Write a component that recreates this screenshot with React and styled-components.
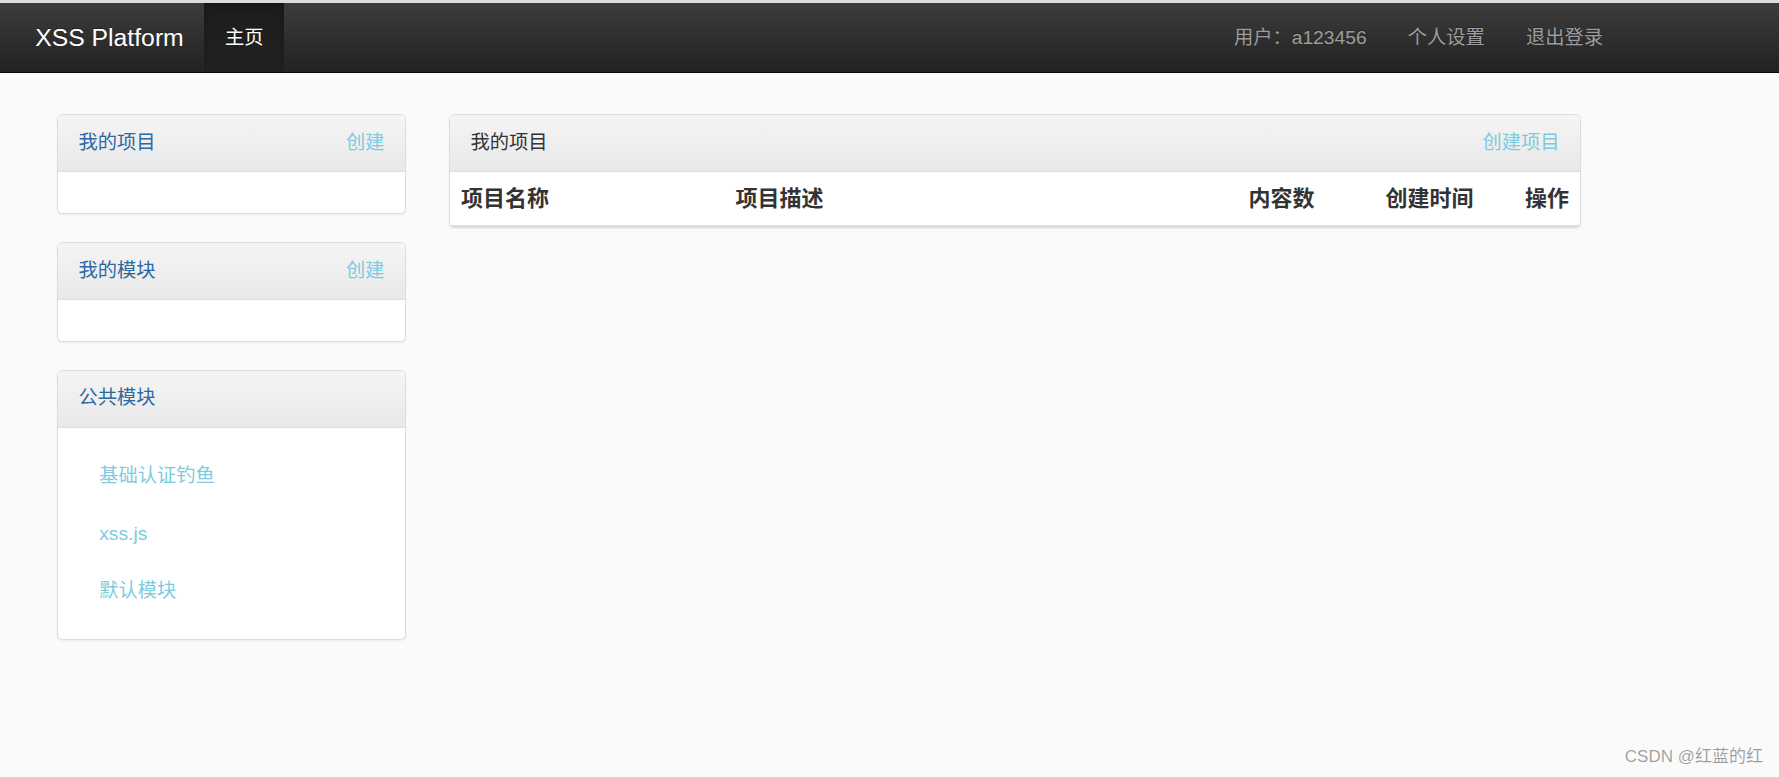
import React from "react";
import styled, { createGlobalStyle } from "styled-components";

const GlobalStyle = createGlobalStyle`
  html, body {
    margin: 0;
    padding: 0;
    background: #fafafa;
  }
  body {
    font-family: "Liberation Sans", "Noto Sans CJK SC", sans-serif;
    font-size: 19.25px;
    line-height: 27.5px;
    color: #333;
  }
  * { box-sizing: border-box; }
`;

const Page = styled.div`
  position: relative;
  min-height: 777px;
  background: #fafafa;
  border-top: 3px solid #dcdcdc;
`;

const Navbar = styled.nav`
  height: 70px;
  background: linear-gradient(to bottom, #3c3c3c 0%, #222 100%);
  border-bottom: 1px solid #080808;
`;

const NavContainer = styled.div`
  width: 1609px;
  margin-left: 14.6px;
  height: 69px;
  display: flex;
  align-items: stretch;
`;

const Brand = styled.a`
  display: flex;
  align-items: center;
  padding: 0 20.6px;
  font-size: 24.75px;
  color: #fff;
  text-decoration: none;
  text-shadow: 0 -1px 0 rgba(0, 0, 0, 0.25);
`;

const NavList = styled.ul`
  display: flex;
  list-style: none;
  margin: 0;
  padding: 0;
  margin-left: ${(p) => (p.$right ? "auto" : "0")};
`;

const NavItem = styled.li`
  display: flex;
`;

const NavLink = styled.a`
  display: flex;
  align-items: center;
  padding: 0 20.6px;
  color: ${(p) => (p.$active ? "#fff" : "#9d9d9d")};
  text-decoration: none;
  text-shadow: 0 -1px 0 rgba(0, 0, 0, 0.25);
  background: ${(p) =>
    p.$active ? "linear-gradient(to bottom, #1c1c1c 0%, #222 100%)" : "transparent"};
  box-shadow: ${(p) => (p.$active ? "inset 0 3px 9px rgba(0, 0, 0, 0.2)" : "none")};
`;

const Content = styled.div`
  display: flex;
  align-items: flex-start;
  gap: 43px;
  padding-left: 57px;
  padding-top: 41px;
`;

const Sidebar = styled.div`
  width: 349px;
  display: flex;
  flex-direction: column;
  gap: 27.5px;
`;

const Main = styled.div`
  width: 1132px;
`;

const Panel = styled.div`
  background: #fff;
  border: 1px solid #ddd;
  border-radius: 5.5px;
  box-shadow: 0 1px 2px rgba(0, 0, 0, 0.06);
  overflow: hidden;
`;

const PanelHeading = styled.div`
  display: flex;
  justify-content: space-between;
  align-items: center;
  padding: 13.75px 20.6px;
  line-height: 28.5px;
  background: linear-gradient(to bottom, #f5f5f5 0%, #e8e8e8 100%);
  border-bottom: 1px solid #ddd;
`;

const PanelTitle = styled.span`
  color: ${(p) => (p.$muted ? "#333" : "#2c68a2")};
`;

const InfoLink = styled.a`
  color: #7ccbe0;
  text-decoration: none;
`;

const PanelBody = styled.div`
  padding: 20.6px;
  min-height: 41.25px;
`;

const PillList = styled.ul`
  list-style: none;
  margin: 0;
  padding: 0;
  display: flex;
  flex-direction: column;
  gap: 2.75px;
`;

const PillLink = styled.a`
  display: block;
  padding: 13.75px 20.6px;
  line-height: 27.5px;
  color: #7ccbe0;
  text-decoration: none;
`;

const TableHead = styled.div`
  display: grid;
  grid-template-columns: 274.6px 513px 137px 138px 1fr;
  border-bottom: 2.75px solid #ddd;
`;

const HeadCell = styled.div`
  padding: 11px;
  font-size: 22px;
  line-height: 31px;
  font-weight: 700;
  color: #333;
  text-align: ${(p) => (p.$align === "right" ? "right" : "left")};
`;

const Watermark = styled.div`
  position: absolute;
  right: 16px;
  bottom: 10px;
  font-size: 17px;
  line-height: 20px;
  color: rgba(0, 0, 0, 0.38);
`;

const modules = ["基础认证钓鱼", "xss.js", "默认模块"];

export default function App() {
  return (
    <>
      <GlobalStyle />
      <Page>
        <Navbar>
          <NavContainer>
            <Brand href="#">XSS Platform</Brand>
            <NavList>
              <NavItem>
                <NavLink $active href="#">主页</NavLink>
              </NavItem>
            </NavList>
            <NavList $right>
              <NavItem>
                <NavLink href="#">用户：a123456</NavLink>
              </NavItem>
              <NavItem>
                <NavLink href="#">个人设置</NavLink>
              </NavItem>
              <NavItem>
                <NavLink href="#">退出登录</NavLink>
              </NavItem>
            </NavList>
          </NavContainer>
        </Navbar>

        <Content>
          <Sidebar>
            <Panel>
              <PanelHeading>
                <PanelTitle>我的项目</PanelTitle>
                <InfoLink href="#">创建</InfoLink>
              </PanelHeading>
              <PanelBody />
            </Panel>
            <Panel>
              <PanelHeading>
                <PanelTitle>我的模块</PanelTitle>
                <InfoLink href="#">创建</InfoLink>
              </PanelHeading>
              <PanelBody />
            </Panel>
            <Panel>
              <PanelHeading>
                <PanelTitle>公共模块</PanelTitle>
              </PanelHeading>
              <PanelBody>
                <PillList>
                  {modules.map((m) => (
                    <li key={m}>
                      <PillLink href="#">{m}</PillLink>
                    </li>
                  ))}
                </PillList>
              </PanelBody>
            </Panel>
          </Sidebar>

          <Main>
            <Panel>
              <PanelHeading>
                <PanelTitle $muted>我的项目</PanelTitle>
                <InfoLink href="#">创建项目</InfoLink>
              </PanelHeading>
              <TableHead>
                <HeadCell>项目名称</HeadCell>
                <HeadCell>项目描述</HeadCell>
                <HeadCell>内容数</HeadCell>
                <HeadCell>创建时间</HeadCell>
                <HeadCell $align="right">操作</HeadCell>
              </TableHead>
            </Panel>
          </Main>
        </Content>

        <Watermark>CSDN @红蓝的红</Watermark>
      </Page>
    </>
  );
}
